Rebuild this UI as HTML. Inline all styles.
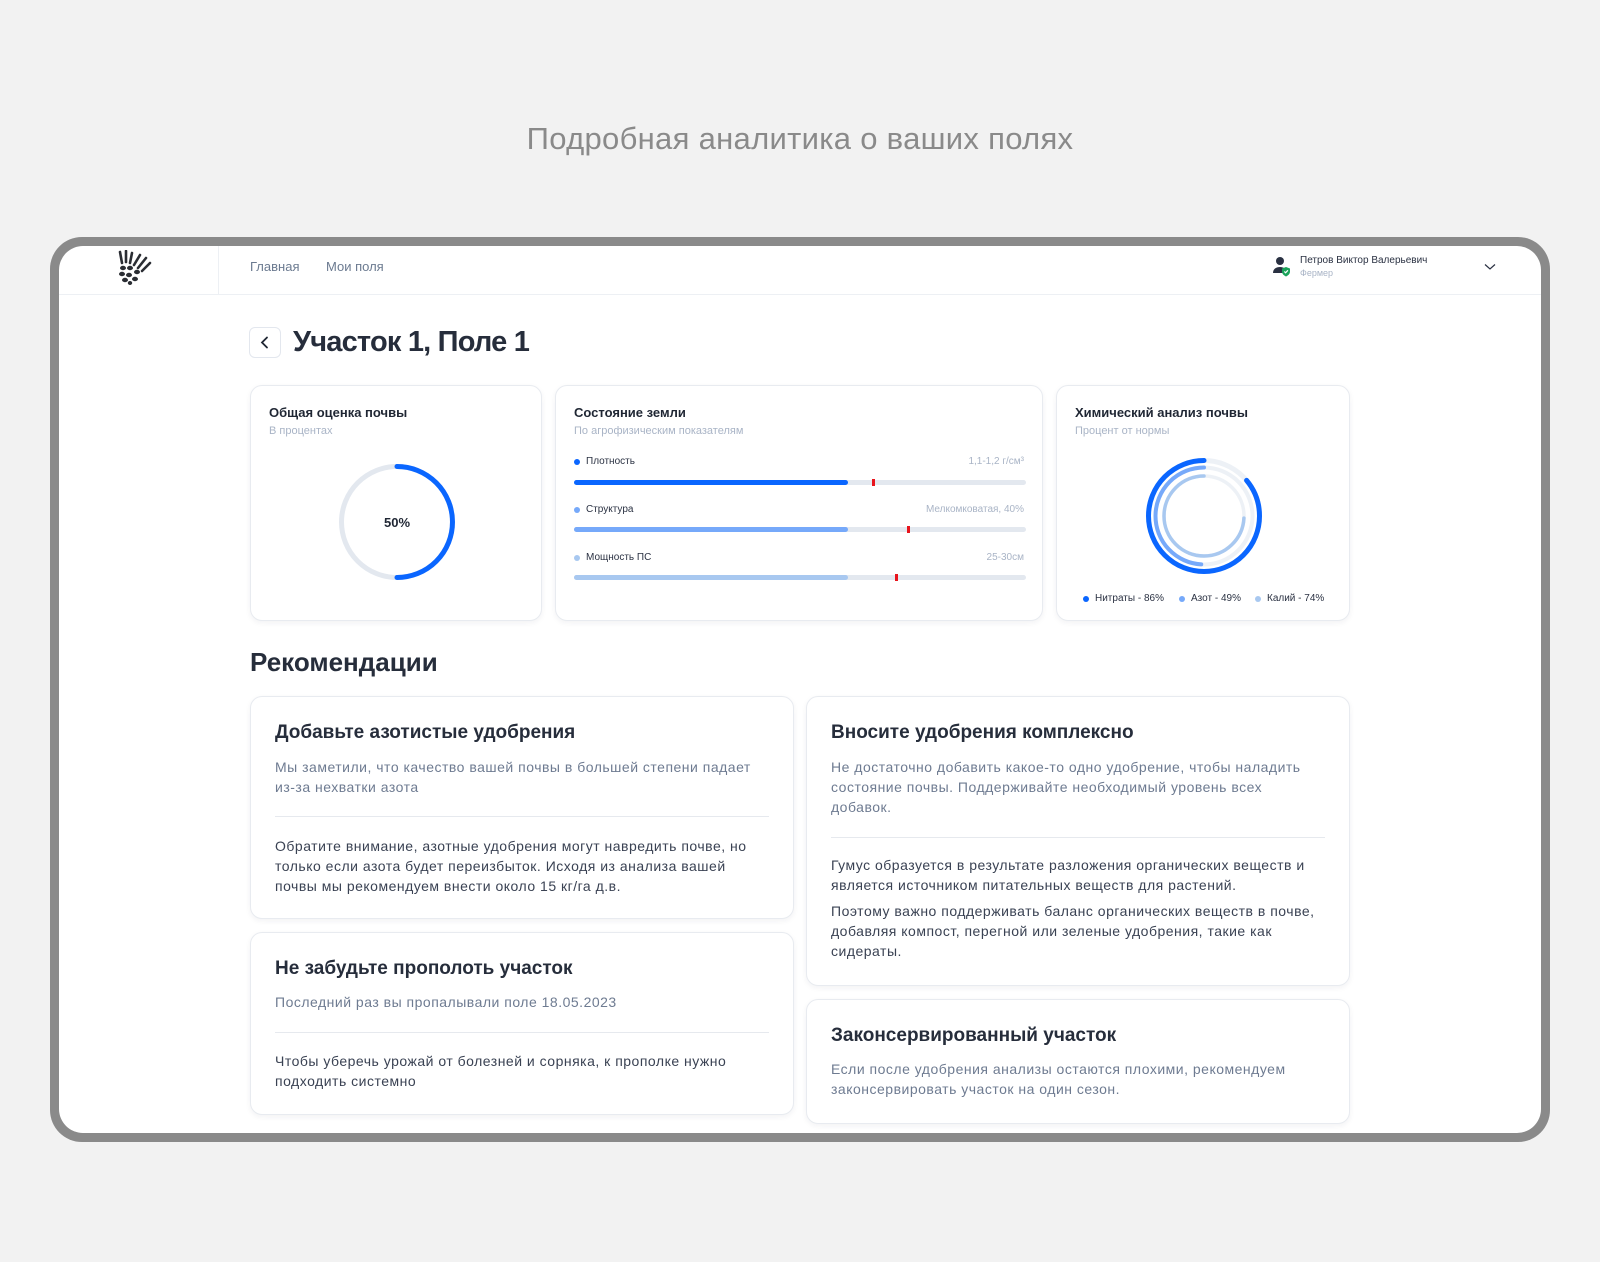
<!DOCTYPE html>
<html><head><meta charset="utf-8">
<style>
*{margin:0;padding:0;box-sizing:border-box}
body{width:1600px;height:1262px;background:#f2f2f2;font-family:"Liberation Sans","DejaVu Sans",sans-serif;position:relative;overflow:hidden;color:#2a3142}
.a{position:absolute;white-space:nowrap}
.frame{position:absolute;left:50px;top:237px;width:1500px;height:905px;background:#8a8a8a;border-radius:32px}
.screen{position:absolute;left:59px;top:246px;width:1482px;height:887px;background:#fff;border-radius:24px;overflow:hidden}
.card{position:absolute;background:#fff;border:1px solid #e8ebf0;border-radius:12px;box-shadow:0 2px 6px rgba(30,40,70,.06)}
.ct{position:absolute;left:18px;top:19px;font-size:13px;font-weight:bold;color:#1f2633}
.cs{position:absolute;left:18px;top:39px;font-size:11px;color:#a9b4c6}
.rt{position:absolute;left:24px;font-size:19px;font-weight:bold;color:#262d3b;white-space:nowrap}
.rs{position:absolute;left:24px;font-size:14px;line-height:20px;color:#6e7b91;letter-spacing:0.5px;white-space:nowrap}
.rb{position:absolute;left:24px;font-size:14px;line-height:20px;color:#3a4253;letter-spacing:0.5px;white-space:nowrap}
.hr{position:absolute;left:24px;right:24px;height:1px;background:#e6e9ee}
.lab{position:absolute;left:30px;font-size:10px;color:#2a3142}
.val{position:absolute;right:18px;font-size:10px;color:#a9b4c6}
.dot{position:absolute;left:18px;width:6px;height:6px;border-radius:50%}
.bar{position:absolute;left:18px;width:452px;height:5px;border-radius:3px;background:#e3e8ef}
.fill{position:absolute;left:0;top:0;height:5px;width:274px;border-radius:3px}
.mk{position:absolute;top:-1px;width:3px;height:7px;background:#e8141c}
</style></head><body>
<div class="a" style="left:0;width:1600px;text-align:center;top:121px;font-size:31px;letter-spacing:0.3px;color:#8a8a8a">Подробная аналитика о ваших полях</div>
<div class="frame"></div>
<div class="screen">
  <div class="a" style="left:0;top:48px;width:1482px;height:1px;background:#edf0f4"></div>
  <div class="a" style="left:159px;top:0;width:1px;height:48px;background:#edf0f4"></div>
  <svg class="a" style="left:57px;top:4px" width="36" height="36" viewBox="0 0 36 36">
    <g stroke="#2a2d33" stroke-width="2.6" stroke-linecap="round" fill="none">
      <line x1="4" y1="2" x2="6" y2="13"/><line x1="10" y1="1" x2="10" y2="12"/><line x1="16" y1="3" x2="14" y2="13"/>
      <line x1="24" y1="5" x2="18" y2="15"/><line x1="30" y1="8" x2="22" y2="18"/><line x1="34" y1="13" x2="26" y2="21"/>
    </g>
    <g fill="#2a2d33">
      <ellipse cx="7" cy="18" rx="3" ry="2.2"/><ellipse cx="14" cy="18" rx="3" ry="2.2"/><ellipse cx="21" cy="22" rx="3" ry="2.2"/>
      <ellipse cx="6" cy="24" rx="3" ry="2.2"/><ellipse cx="13" cy="25" rx="3" ry="2.2"/><ellipse cx="19" cy="29" rx="3" ry="2.2"/>
      <ellipse cx="9" cy="30" rx="3" ry="2.2"/><ellipse cx="14" cy="33" rx="2.2" ry="2"/>
    </g>
  </svg>
  <div class="a" style="left:191px;top:13px;font-size:13px;color:#6b7a90">Главная</div>
  <div class="a" style="left:267px;top:13px;font-size:13px;color:#6b7a90">Мои поля</div>
  <svg class="a" style="left:1212px;top:9px" width="24" height="24" viewBox="0 0 24 24">
    <circle cx="9" cy="6" r="4" fill="#2a3142"/><path d="M2 18c0-4 3-6 7-6 2 0 3 .5 4 1v5z" fill="#2a3142"/>
    <path d="M15 12l4 1.5v3c0 2.5-2 4-4 5-2-1-4-2.5-4-5v-3z" fill="#1aa35a"/>
    <path d="M13.3 16.5l1.3 1.3 2.3-2.5" stroke="#fff" stroke-width="1.2" fill="none"/>
  </svg>
  <div class="a" style="left:1241px;top:9px;font-size:10px;color:#2a3142">Петров Виктор Валерьевич</div>
  <div class="a" style="left:1241px;top:22px;font-size:9px;color:#a9b4c6">Фермер</div>
  <svg class="a" style="left:1425px;top:17px" width="12" height="8" viewBox="0 0 12 8"><path d="M1 1.5l5 4.5 5-4.5" stroke="#2a3142" stroke-width="1.2" fill="none"/></svg>

  <div class="a" style="left:190px;top:81px;width:32px;height:31px;border:1px solid #e3e7ee;border-radius:6px"></div>
  <svg class="a" style="left:200px;top:90px" width="12" height="13" viewBox="0 0 12 13"><path d="M8 1.5l-5 5 5 5" stroke="#1f2633" stroke-width="1.8" fill="none" stroke-linecap="round"/></svg>
  <div class="a" style="left:234px;top:80px;font-size:29px;font-weight:bold;color:#262d3b;letter-spacing:-0.8px">Участок 1, Поле 1</div>

  <div class="card" style="left:191px;top:139px;width:292px;height:236px">
    <div class="ct">Общая оценка почвы</div><div class="cs">В процентах</div>
    <svg class="a" style="left:0;top:0" width="292" height="236">
      <circle cx="146" cy="136" r="55.5" stroke="#e3e8ef" stroke-width="5" fill="none"/>
      <path d="M146 80.5 A55.5 55.5 0 0 1 146 191.5" stroke="#0a66ff" stroke-width="5" fill="none" stroke-linecap="round"/>
      <text x="146" y="141" text-anchor="middle" font-family="Liberation Sans, sans-serif" font-size="13" font-weight="bold" fill="#1f2633">50%</text>
    </svg>
  </div>

  <div class="card" style="left:496px;top:139px;width:488px;height:236px">
    <div class="ct">Состояние земли</div><div class="cs">По агрофизическим показателям</div>
    <div class="dot" style="top:73px;background:#0a66ff"></div><div class="lab" style="top:70px">Плотность</div><div class="val" style="top:70px">1,1-1,2 г/см³</div>
    <div class="bar" style="top:94px"><div class="fill" style="background:#0a66ff"></div><div class="mk" style="left:298px"></div></div>
    <div class="dot" style="top:121px;background:#76a9fa"></div><div class="lab" style="top:118px">Структура</div><div class="val" style="top:118px">Мелкомковатая, 40%</div>
    <div class="bar" style="top:141px"><div class="fill" style="background:#76a9fa"></div><div class="mk" style="left:333px"></div></div>
    <div class="dot" style="top:169px;background:#a8c8f0"></div><div class="lab" style="top:166px">Мощность ПС</div><div class="val" style="top:166px">25-30см</div>
    <div class="bar" style="top:189px"><div class="fill" style="background:#a8c8f0"></div><div class="mk" style="left:321px"></div></div>
  </div>

  <div class="card" style="left:997px;top:139px;width:294px;height:236px">
    <div class="ct">Химический анализ почвы</div><div class="cs">Процент от нормы</div>
    <svg class="a" style="left:0;top:0" width="294" height="236">
      <g transform="translate(147,130)" fill="none">
        <circle r="55.5" stroke="#edf1f6" stroke-width="5"/>
        <circle r="48.5" stroke="#edf1f6" stroke-width="4"/>
        <circle r="40" stroke="#edf1f6" stroke-width="3.5"/>
        <g transform="scale(-1,1) rotate(-90)">
          <circle r="55.5" stroke="#0a66ff" stroke-width="5" stroke-dasharray="299.9 400" stroke-linecap="round"/>
          <circle r="48.5" stroke="#76a9fa" stroke-width="4" stroke-dasharray="149.3 400" stroke-linecap="round"/>
          <circle r="40" stroke="#a8c8f0" stroke-width="3.5" stroke-dasharray="186 400" stroke-linecap="round"/>
        </g>
      </g>
    </svg>
    <div class="a" style="left:26px;top:210px;width:6px;height:6px;border-radius:50%;background:#0a66ff"></div>
    <div class="a" style="left:38px;top:207px;font-size:10px">Нитраты - 86%</div>
    <div class="a" style="left:122px;top:210px;width:6px;height:6px;border-radius:50%;background:#76a9fa"></div>
    <div class="a" style="left:134px;top:207px;font-size:10px">Азот - 49%</div>
    <div class="a" style="left:198px;top:210px;width:6px;height:6px;border-radius:50%;background:#a8c8f0"></div>
    <div class="a" style="left:210px;top:207px;font-size:10px">Калий - 74%</div>
  </div>

  <div class="a" style="left:191px;top:401px;font-size:26px;font-weight:bold;color:#262d3b">Рекомендации</div>

  <div class="card" style="left:191px;top:450px;width:544px;height:223px">
    <div class="rt" style="top:25px">Добавьте азотистые удобрения</div>
    <div class="rs" style="top:60px">Мы заметили, что качество вашей почвы в большей степени падает<br>из-за нехватки азота</div>
    <div class="hr" style="top:119px"></div>
    <div class="rb" style="top:139px">Обратите внимание, азотные удобрения могут навредить почве, но<br>только если азота будет переизбыток. Исходя из анализа вашей<br>почвы мы рекомендуем внести около 15 кг/га д.в.</div>
  </div>
  <div class="card" style="left:191px;top:686px;width:544px;height:183px">
    <div class="rt" style="top:25px">Не забудьте прополоть участок</div>
    <div class="rs" style="top:59px">Последний раз вы пропалывали поле 18.05.2023</div>
    <div class="hr" style="top:99px"></div>
    <div class="rb" style="top:118px">Чтобы уберечь урожай от болезней и сорняка, к прополке нужно<br>подходить системно</div>
  </div>
  <div class="card" style="left:747px;top:450px;width:544px;height:290px">
    <div class="rt" style="top:25px">Вносите удобрения комплексно</div>
    <div class="rs" style="top:60px">Не достаточно добавить какое-то одно удобрение, чтобы наладить<br>состояние почвы. Поддерживайте необходимый уровень всех<br>добавок.</div>
    <div class="hr" style="top:140px"></div>
    <div class="rb" style="top:158px">Гумус образуется в результате разложения органических веществ и<br>является источником питательных веществ для растений.</div>
    <div class="rb" style="top:204px">Поэтому важно поддерживать баланс органических веществ в почве,<br>добавляя компост, перегной или зеленые удобрения, такие как<br>сидераты.</div>
  </div>
  <div class="card" style="left:747px;top:753px;width:544px;height:125px">
    <div class="rt" style="top:25px">Законсервированный участок</div>
    <div class="rs" style="top:59px">Если после удобрения анализы остаются плохими, рекомендуем<br>законсервировать участок на один сезон.</div>
  </div>
</div>
</body></html>
